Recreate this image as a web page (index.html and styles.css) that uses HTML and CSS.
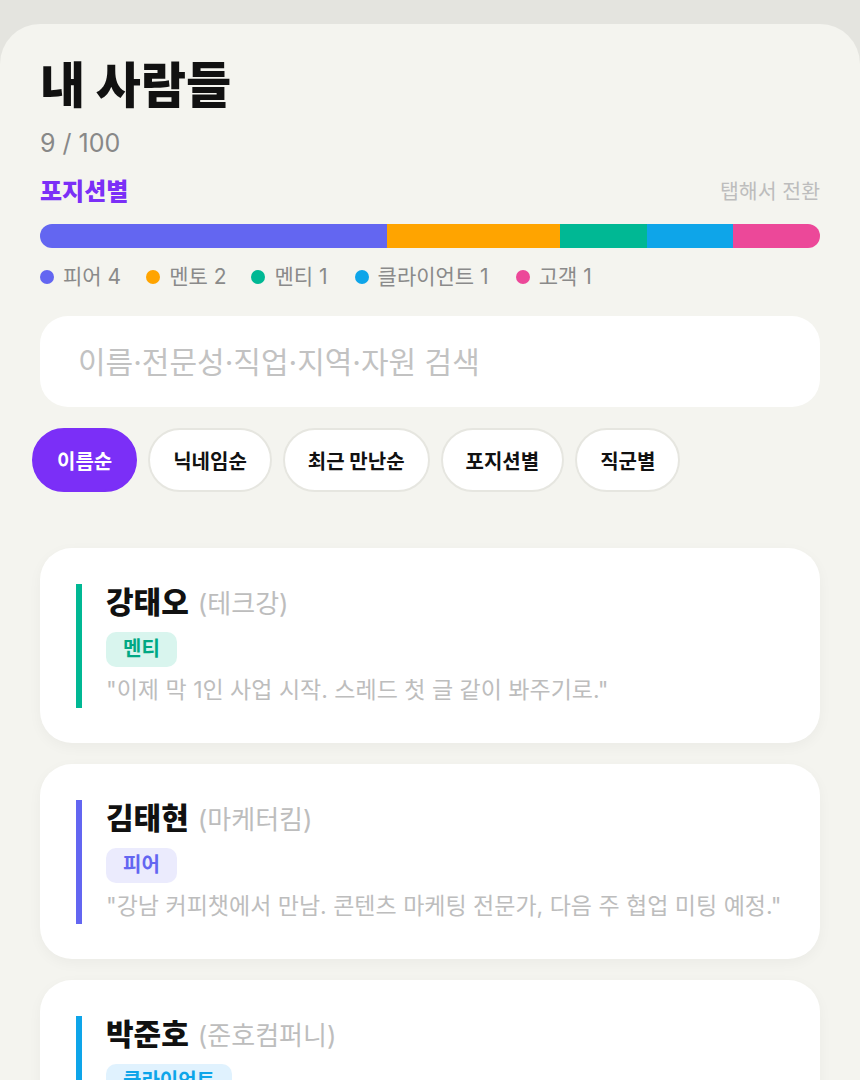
FILE: index.html
```html
<!DOCTYPE html>
<html lang="ko">
<head>
<meta charset="utf-8">
<title>내 사람들</title>
<link rel="stylesheet" href="styles.css">
</head>
<body>
<div class="panel">
  <h1 class="title">내 사람들</h1>
  <div class="count">9 / 100</div>
  <div class="section-head">
    <span class="section-title">포지션별</span>
    <span class="section-hint">탭해서 전환</span>
  </div>
  <div class="bar">
    <span class="seg seg-peer" style="flex-grow:4"></span>
    <span class="seg seg-mentor" style="flex-grow:2"></span>
    <span class="seg seg-mentee" style="flex-grow:1"></span>
    <span class="seg seg-client" style="flex-grow:1"></span>
    <span class="seg seg-customer" style="flex-grow:1"></span>
  </div>
  <div class="legend">
    <span class="legend-item"><i class="dot seg-peer"></i>피어 4</span>
    <span class="legend-item"><i class="dot seg-mentor"></i>멘토 2</span>
    <span class="legend-item"><i class="dot seg-mentee"></i>멘티 1</span>
    <span class="legend-item"><i class="dot seg-client"></i>클라이언트 1</span>
    <span class="legend-item"><i class="dot seg-customer"></i>고객 1</span>
  </div>
  <div class="search">
    <input class="search-input" type="text" placeholder="이름·전문성·직업·지역·자원 검색">
  </div>
  <div class="chips">
    <button class="chip chip-active">이름순</button>
    <button class="chip">닉네임순</button>
    <button class="chip">최근 만난순</button>
    <button class="chip">포지션별</button>
    <button class="chip">직군별</button>
  </div>
  <div class="cards">
    <div class="card">
      <div class="card-body accent-mentee">
        <div class="name-line"><span class="name">강태오</span><span class="nick">(테크강)</span></div>
        <span class="badge badge-mentee">멘티</span>
        <div class="quote">"이제 막 1인 사업 시작. 스레드 첫 글 같이 봐주기로."</div>
      </div>
    </div>
    <div class="card">
      <div class="card-body accent-peer">
        <div class="name-line"><span class="name">김태현</span><span class="nick">(마케터킴)</span></div>
        <span class="badge badge-peer">피어</span>
        <div class="quote">"강남 커피챗에서 만남. 콘텐츠 마케팅 전문가, 다음 주 협업 미팅 예정."</div>
      </div>
    </div>
    <div class="card">
      <div class="card-body accent-client">
        <div class="name-line"><span class="name">박준호</span><span class="nick">(준호컴퍼니)</span></div>
        <span class="badge badge-client">클라이언트</span>
        <div class="quote">"웹사이트 리뉴얼 의뢰. 다음 달 킥오프 예정."</div>
      </div>
    </div>
  </div>
</div>
</body>
</html>
```

FILE: styles.css
```css
* { box-sizing: border-box; }
html, body {
  margin: 0;
  padding: 0;
}
body {
  background: #e4e4df;
  font-family: Inter, "Noto Sans CJK KR", sans-serif;
  color: #111;
  padding-top: 24px;
  height: 1080px;
  overflow: hidden;
}
.panel {
  background: #f4f4ef;
  border-radius: 40px 40px 0 0;
  padding: 32px 40px 40px;
  height: 1056px;
  overflow: hidden;
}
.title {
  margin: 0;
  font-size: 49px;
  line-height: 60px;
  font-weight: 800;
  color: #111;
}
.count {
  margin-top: 12px;
  font-size: 25px;
  line-height: 30px;
  color: #888;
}
.section-head {
  margin-top: 18px;
  height: 32px;
  display: flex;
  justify-content: space-between;
  align-items: center;
}
.section-title {
  font-size: 24px;
  line-height: 32px;
  font-weight: 800;
  color: #7b2ff7;
}
.section-hint {
  font-size: 20.5px;
  line-height: 32px;
  color: #bdbdbd;
}
.bar {
  margin-top: 16px;
  display: flex;
  height: 24px;
  border-radius: 12px;
  overflow: hidden;
}
.seg { display: block; flex-basis: 0; }
.seg-peer { background: #6366f1; }
.seg-mentor { background: #ffa400; }
.seg-mentee { background: #00b894; }
.seg-client { background: #0ea5e9; }
.seg-customer { background: #ec4899; }
.legend {
  margin-top: 14px;
  display: flex;
  gap: 25px;
  font-size: 21px;
  line-height: 30px;
  color: #8a8a8a;
}
.legend-item {
  display: flex;
  align-items: center;
  gap: 9px;
}
.legend-item:nth-child(4),
.legend-item:nth-child(5) { margin-left: 2px; }
.dot {
  width: 14px;
  height: 14px;
  border-radius: 50%;
  display: inline-block;
}
.search {
  margin-top: 24px;
  background: #fff;
  border-radius: 28px;
  height: 91px;
  display: flex;
  align-items: center;
  padding: 0 38px;
}
.search-input {
  border: 0;
  outline: 0;
  background: transparent;
  width: 100%;
  font-family: Inter, "Noto Sans CJK KR", sans-serif;
  font-size: 30px;
  color: #333;
  padding: 0;
}
.search-input::placeholder { color: #c2c2c2; }
.chips {
  margin: 21px 0 0 -8px;
  display: flex;
  gap: 11px;
}
.chip {
  height: 64px;
  padding: 0 23px;
  border-radius: 32px;
  border: 2px solid #e6e6e0;
  background: #fff;
  font-family: Inter, "Noto Sans CJK KR", sans-serif;
  font-size: 20px;
  font-weight: 700;
  color: #111;
}
.chip-active {
  background: #7b2ff7;
  border-color: #7b2ff7;
  color: #fff;
}
.cards {
  margin-top: 56px;
  display: flex;
  flex-direction: column;
  gap: 21px;
}
.card {
  background: #fff;
  border-radius: 32px;
  padding: 36px 36px 35px;
  box-shadow: 0 4px 14px rgba(0, 0, 0, 0.04);
}
.card-body {
  border-left: 6px solid;
  padding-left: 24px;
  min-height: 124px;
  display: flex;
  flex-direction: column;
  align-items: flex-start;
}
.accent-mentee { border-color: #00b894; }
.accent-peer { border-color: #6366f1; }
.accent-client { border-color: #0ea5e9; }
.name-line {
  display: flex;
  align-items: baseline;
  gap: 9px;
  height: 36px;
  line-height: 36px;
}
.name {
  font-size: 30px;
  font-weight: 800;
  color: #111;
}
.nick {
  font-size: 26px;
  color: #bdbdbd;
}
.badge {
  margin-top: 12px;
  padding: 4px 17px;
  border-radius: 10px;
  font-size: 20px;
  line-height: 27px;
  font-weight: 700;
}
.badge-mentee { background: #d9f5ee; color: #00a884; }
.badge-peer { background: #ebebfd; color: #6366f1; }
.badge-client { background: #e0f2fe; color: #0ea5e9; }
.quote {
  margin-top: 8px;
  font-size: 23px;
  line-height: 30px;
  color: #bdbdbd;
}
```
